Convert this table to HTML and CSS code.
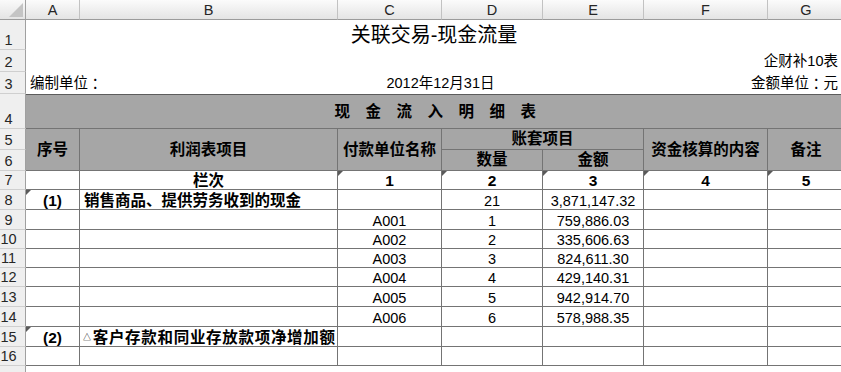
FILE: index.html
```html
<!DOCTYPE html>
<html lang="zh-CN">
<head>
<meta charset="utf-8">
<title>关联交易-现金流量</title>
<link rel="stylesheet" href="styles.css">
</head>
<body>
<div class="sheet">
  <div class="corner"><svg class="corner-tri" width="26" height="20" viewBox="0 0 26 20"><polygon points="23,3 23,17 9,17" fill="#c4c4c4"/></svg></div>
  <div class="col">A</div>
  <div class="col">B</div>
  <div class="col">C</div>
  <div class="col">D</div>
  <div class="col">E</div>
  <div class="col">F</div>
  <div class="col col-last">G</div>

  <div class="rh">1</div>
  <div class="title">关联交易-现金流量</div>

  <div class="rh">2</div>
  <div class="plain span-all right">企财补10表</div>

  <div class="rh">3</div>
  <div class="plain span-2">编制单位<span class="punct">：</span></div>
  <div class="plain span-2 center">2012年12月31日</div>
  <div class="plain span-3 right">金额单位<span class="punct">：</span>元</div>

  <div class="rh">4</div>
  <div class="band">现 金 流 入 明 细 表</div>

  <div class="rh">5</div>
  <div class="cell hd rows-2">序号</div>
  <div class="cell hd rows-2">利润表项目</div>
  <div class="cell hd rows-2">付款单位名称</div>
  <div class="cell hd span-2">账套项目</div>
  <div class="cell hd rows-2">资金核算的内容</div>
  <div class="cell hd rows-2 last">备注</div>

  <div class="rh">6</div>
  <div class="cell hd">数量</div>
  <div class="cell hd">金额</div>

  <div class="rh">7</div>
  <div class="cell"></div>
  <div class="cell center bold">栏次</div>
  <div class="cell center bold mark">1</div>
  <div class="cell center bold mark">2</div>
  <div class="cell center bold mark">3</div>
  <div class="cell center bold mark">4</div>
  <div class="cell center bold mark last">5</div>

  <div class="rh">8</div>
  <div class="cell center bold mark">(1)</div>
  <div class="cell bold">销售商品、提供劳务收到的现金</div>
  <div class="cell"></div>
  <div class="cell center">21</div>
  <div class="cell center">3,871,147.32</div>
  <div class="cell"></div>
  <div class="cell last"></div>

  <div class="rh">9</div>
  <div class="cell"></div>
  <div class="cell"></div>
  <div class="cell center">A001</div>
  <div class="cell center">1</div>
  <div class="cell center">759,886.03</div>
  <div class="cell"></div>
  <div class="cell last"></div>

  <div class="rh">10</div>
  <div class="cell"></div>
  <div class="cell"></div>
  <div class="cell center">A002</div>
  <div class="cell center">2</div>
  <div class="cell center">335,606.63</div>
  <div class="cell"></div>
  <div class="cell last"></div>

  <div class="rh">11</div>
  <div class="cell"></div>
  <div class="cell"></div>
  <div class="cell center">A003</div>
  <div class="cell center">3</div>
  <div class="cell center">824,611.30</div>
  <div class="cell"></div>
  <div class="cell last"></div>

  <div class="rh">12</div>
  <div class="cell"></div>
  <div class="cell"></div>
  <div class="cell center">A004</div>
  <div class="cell center">4</div>
  <div class="cell center">429,140.31</div>
  <div class="cell"></div>
  <div class="cell last"></div>

  <div class="rh">13</div>
  <div class="cell"></div>
  <div class="cell"></div>
  <div class="cell center">A005</div>
  <div class="cell center">5</div>
  <div class="cell center">942,914.70</div>
  <div class="cell"></div>
  <div class="cell last"></div>

  <div class="rh">14</div>
  <div class="cell"></div>
  <div class="cell"></div>
  <div class="cell center">A006</div>
  <div class="cell center">6</div>
  <div class="cell center">578,988.35</div>
  <div class="cell"></div>
  <div class="cell last"></div>

  <div class="rh">15</div>
  <div class="cell center bold mark">(2)</div>
  <div class="cell bold wide"><span class="tri">△</span>客户存款和同业存放款项净增加额</div>
  <div class="cell"></div>
  <div class="cell"></div>
  <div class="cell"></div>
  <div class="cell"></div>
  <div class="cell last"></div>

  <div class="rh">16</div>
  <div class="cell"></div>
  <div class="cell"></div>
  <div class="cell"></div>
  <div class="cell"></div>
  <div class="cell"></div>
  <div class="cell"></div>
  <div class="cell last"></div>

  <div class="rh rh-cut"></div>
</div>
</body>
</html>
```

FILE: styles.css
```css
* { box-sizing: border-box; }

html, body {
  margin: 0;
  padding: 0;
  background: #ffffff;
}

body {
  width: 841px;
  height: 372px;
  overflow: hidden;
  font-family: "Liberation Sans", "Noto Sans CJK SC", sans-serif;
  font-size: 14.5px;
  color: #000000;
}

.sheet {
  display: grid;
  width: 844px;
  grid-template-columns: 26px 54px 258px 104px 101px 101px 124px 76px;
  grid-template-rows: 20px 30px 22px 22px 35px 21px 21px 19px 20px 20px 19px 19px 19px 20px 20px 20px 19px 6px;
}

/* headers */
.corner {
  background: linear-gradient(#fafafa, #e4e4e4);
  border-right: 1px solid #a0a0a0;
  border-bottom: 1px solid #9b9b9b;
}
.corner-tri { display: block; }

.col {
  display: flex;
  align-items: center;
  justify-content: center;
  background: linear-gradient(#fbfbfb, #e4e4e4);
  border-right: 1px solid #c2c2c2;
  border-bottom: 1px solid #9b9b9b;
  color: #262626;
  line-height: 16px;
}
.col-last { border-right: none; }

.rh {
  display: flex;
  align-items: flex-end;
  justify-content: center;
  padding-right: 8px;
  padding-bottom: 1px;
  background: #efefef;
  border-right: 1px solid #a0a0a0;
  border-bottom: 1px solid #cfcfcf;
  color: #262626;
  line-height: 16px;
}
.rh-cut { border-bottom: none; }

/* top area, no gridlines */
.title {
  grid-column: 2 / 9;
  display: flex;
  align-items: center;
  justify-content: center;
  padding-right: 2px;
  font-size: 20px;
  line-height: 24px;
}

.plain {
  display: flex;
  align-items: center;
  padding: 0 4px;
  line-height: 16px;
  white-space: nowrap;
}
.plain.right { justify-content: flex-end; padding-right: 6px; }
.plain.center { justify-content: center; }

.punct { font-family: "Noto Sans CJK TC", sans-serif; }

.span-all { grid-column: 2 / 9; }
.span-2 { grid-column: span 2; }
.span-3 { grid-column: span 3; }
.rows-2 { grid-row: span 2; }

.band {
  grid-column: 2 / 9;
  display: flex;
  align-items: center;
  justify-content: center;
  padding-left: 6px;
  background: #a6a6a6;
  border-top: 1px solid #5c5c5c;
  border-bottom: 1px solid #747474;
  font-weight: bold;
  font-size: 15.5px;
  letter-spacing: 5.6px;
  white-space: pre;
  line-height: 18px;
}

/* table cells */
.cell {
  position: relative;
  display: flex;
  align-items: flex-end;
  padding: 0 4px;
  border-right: 1px solid #747474;
  border-bottom: 1px solid #747474;
  line-height: 16px;
  white-space: nowrap;
  overflow: hidden;
}
.cell.last { border-right: none; }
.cell.center { justify-content: center; }
.cell.bold { font-weight: bold; font-size: 15.5px; }
.cell.wide { letter-spacing: 0.7px; padding-left: 3px; }

.hd {
  align-items: center;
  justify-content: center;
  background: #a6a6a6;
  font-weight: bold;
  font-size: 15.5px;
}

.mark::before {
  content: "";
  position: absolute;
  top: 0;
  left: 0;
  border-top: 5px solid #5a5a5a;
  border-right: 5px solid transparent;
}

.tri {
  font-size: 8px;
  font-weight: normal;
  margin-right: 1px;
  line-height: 16px;
}
```
